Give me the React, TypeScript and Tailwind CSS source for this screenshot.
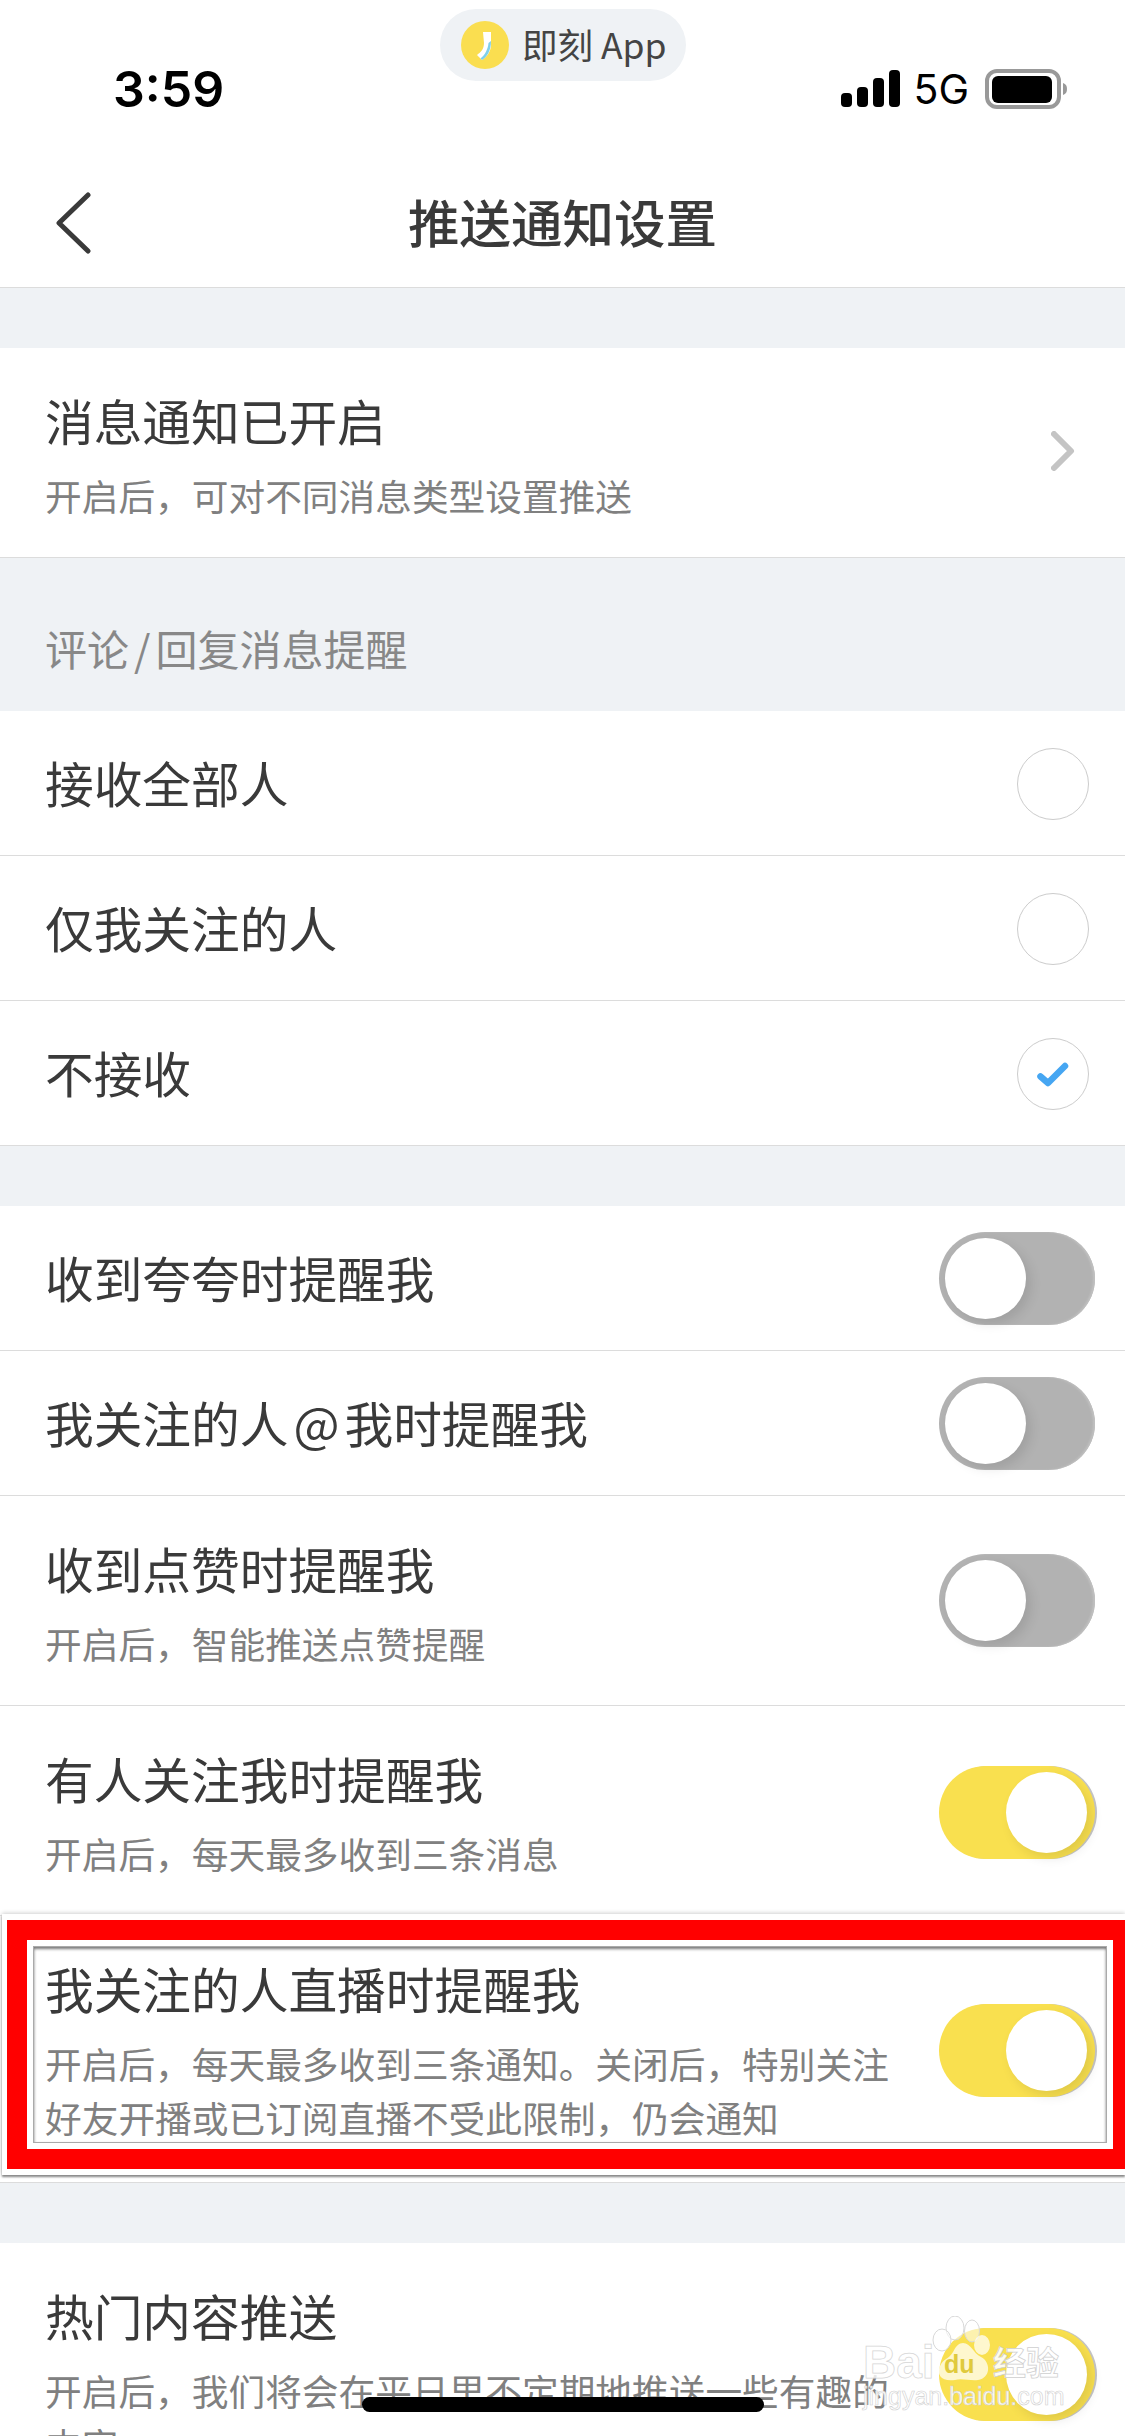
import React from "react";

const CJK = "font-['Noto_Sans_CJK_SC','Noto_Sans',sans-serif]";

function Toggle({ on }: { on: boolean }) {
  return (
    <div
      className={
        on
          ? "flex h-[93px] w-[156px] shrink-0 items-center justify-end rounded-full bg-[#f9e04f] pr-[8px] shadow-[2px_0_0_#c4c4c4]"
          : "flex h-[93px] w-[156px] shrink-0 items-center justify-start rounded-full bg-[#b2b2b2] pl-[6px] shadow-[inset_-2px_0_2px_#c0c0c0]"
      }
    >
      <div className="h-[81px] w-[81px] rounded-full bg-white shadow-[5px_5px_12px_rgba(0,0,0,0.1)]" />
    </div>
  );
}

function Radio({ on }: { on?: boolean }) {
  return (
    <div className="mr-[6px] flex h-[72px] w-[72px] shrink-0 items-center justify-center rounded-full border-[1.5px] border-[#cccccc]">
      {on && (
        <svg width="32" height="26" viewBox="0 0 32 26" fill="none">
          <path d="M3.5 15.5 L11 22 L28 5" stroke="#46a6f2" strokeWidth="6.5" strokeLinecap="round" strokeLinejoin="round" />
        </svg>
      )}
    </div>
  );
}

function Chevron() {
  return (
    <svg className="mr-[20px] mb-[3px] shrink-0" width="24" height="40" viewBox="0 0 24 40" fill="none">
      <path d="M3 3 L20 20 L3 37" stroke="#c4c4c4" strokeWidth="6" strokeLinecap="round" strokeLinejoin="round" />
    </svg>
  );
}

function SimpleRow({ title, control }: { title: React.ReactNode; control: React.ReactNode }) {
  return (
    <div className="flex h-[145px] items-center justify-between border-b border-[#dcdcdc] bg-white pl-[45px] pr-[30px]">
      <div className="pb-[3px] text-[48.7px] leading-[56px] text-[#3a3a3a]">{title}</div>
      <div className="mt-[1px]">{control}</div>
    </div>
  );
}

function SubRow({
  title,
  sub,
  control,
  overlay,
  tall,
}: {
  title: string;
  sub: string;
  control: React.ReactNode;
  overlay?: React.ReactNode;
  tall?: boolean;
}) {
  return (
    <div className="relative flex items-center justify-between border-b border-[#dcdcdc] bg-white pl-[45px] pr-[30px]">
      <div className={tall ? "flex min-w-0 flex-col pb-[38px] pt-[44px]" : "flex min-w-0 flex-col pb-[35px] pt-[44px]"}>
        <div className="text-[48.7px] leading-[56px] text-[#3a3a3a]">{title}</div>
        <div className="mt-[20px] max-w-[860px] text-[36.7px] leading-[54px] text-[#808080]">{sub}</div>
      </div>
      {control}
      {overlay}
    </div>
  );
}

function Annotation() {
  return (
    <div className="pointer-events-none absolute left-[2px] right-0 top-[-2px] h-[261px] border-y-[6px] border-l-[5px] border-white shadow-[0_2px_2px_#888888,0_-1px_4px_#d0d0d0]">
      <div className="h-full border-y-[20px] border-l-[20px] border-r-[12px] border-[#ff0000]">
        <div className="h-full border-[6px] border-white">
          <div className="h-full border border-[#aaaaaa] shadow-[inset_0_2px_3px_#777777]" />
        </div>
      </div>
    </div>
  );
}

function Watermark() {
  return (
    <div className="pointer-events-none absolute left-[863px] top-[47px] h-[125px] w-[205px]">
      <span className="absolute left-0 top-[47px] font-['Liberation_Sans',sans-serif] text-[46px] font-bold leading-[50px] text-white/80 [-webkit-text-stroke:0.75px_#d6d6d6]">
        Bai
      </span>
      <svg className="absolute left-[69px] top-[26px]" width="62" height="70" viewBox="0 0 62 70">
        <ellipse cx="23" cy="12" rx="9" ry="12" fill="#ffffff" fillOpacity="0.55" stroke="#d8d8d8" />
        <ellipse cx="40" cy="15" rx="7.5" ry="11" fill="#ffffff" fillOpacity="0.55" stroke="#d8d8d8" />
        <ellipse cx="10" cy="24" rx="9" ry="11" fill="#ffffff" fillOpacity="0.55" stroke="#d8d8d8" />
        <ellipse cx="50" cy="29" rx="8" ry="10" fill="#ffffff" fillOpacity="0.72" />
        <path d="M31 27 C39 27 41 37 49 41 C59 46 59 62 46 64 C38 65 30 62 23 64 C10 66 4 59 8 50 C11 43 17 43 21 36 C24 30 27 27 31 27 Z" fill="#ffffff" fillOpacity="0.72" />
        <text x="12" y="57" fontFamily="Liberation Sans, sans-serif" fontWeight="700" fontSize="25" fill="#e0ca3c">du</text>
      </svg>
      <span className={`absolute left-[130px] top-[51px] text-[33px] font-bold leading-[40px] text-white/90 [-webkit-text-stroke:0.75px_#cfcfcf] ${CJK}`}>
        经验
      </span>
      <span className="absolute left-0 top-[91px] whitespace-nowrap font-['Liberation_Sans',sans-serif] text-[25px] leading-[30px] text-white/90 [-webkit-text-stroke:0.6px_#d0d0d0]">
        jingyan.baidu.com
      </span>
    </div>
  );
}

export default function App() {
  return (
    <div className={`relative h-[2436px] w-[1125px] overflow-hidden bg-[#eff2f5] ${CJK}`}>
      <header className="flex h-[288px] flex-col border-b border-[#dcdcdc] bg-white">
        <div className="mt-[60px] flex h-[58px] items-center justify-between pl-[113px] pr-[56px]">
          <span className="font-['Inter',sans-serif] text-[50px] font-semibold leading-none text-black">3:59</span>
          <div className="flex items-center">
            <svg width="60" height="40" viewBox="0 0 60 40" fill="#000000">
              <rect x="1" y="24" width="11" height="14" rx="4" />
              <rect x="17" y="18" width="11" height="20" rx="4" />
              <rect x="33" y="9" width="11" height="29" rx="4" />
              <rect x="49" y="1" width="11" height="37" rx="4" />
            </svg>
            <span className="ml-[13px] font-['Inter',sans-serif] text-[41px] font-normal leading-none text-black">5G</span>
            <svg className="ml-[16px]" width="84" height="40" viewBox="0 0 84 40" fill="none">
              <rect x="2" y="2" width="72" height="36" rx="10" stroke="#999999" strokeWidth="4" />
              <rect x="7" y="7" width="60" height="27" rx="6" fill="#000000" />
              <path d="M78 14 C81 15 82 17 82 20 C82 23 81 25 78 26 Z" fill="#999999" />
            </svg>
          </div>
        </div>
        <nav className="mt-[53px] grid h-[100px] grid-cols-[1fr_auto_1fr] items-center">
          <div className="mt-[4px] pl-[55px]">
            <svg width="36" height="62" viewBox="0 0 36 62" fill="none">
              <path d="M33 3 L4 31 L33 59" stroke="#3a3a3a" strokeWidth="5" strokeLinecap="round" strokeLinejoin="round" />
            </svg>
          </div>
          <h1 className="text-[51.5px] font-medium leading-none text-[#3a3a3a]">推送通知设置</h1>
          <div />
        </nav>
      </header>

      <div className="absolute left-[440px] top-[9px] flex h-[72px] w-[246px] items-center gap-[13px] rounded-full bg-[#eff2f5] pl-[21px]">
        <svg width="48" height="48" viewBox="0 0 48 48">
          <circle cx="24" cy="24" r="24" fill="#fade50" />
          <path d="M22 11 L30 11 L30 24 C30 30 26 36 21 39 L16 34 C20 31 23 28 23 22 Z" fill="#ffffff" />
          <path d="M30 20 C30 30 26 36 21 39 L19.5 37.5 C24 34 27 28 27.5 22 Z" fill="#7fd0ea" />
        </svg>
        <span className="mb-[3px] whitespace-nowrap text-[35.5px] leading-none text-[#444444]">即刻 App</span>
      </div>

      <div className="mt-[60px]">
        <SubRow title="消息通知已开启" sub="开启后，可对不同消息类型设置推送" control={<Chevron />} />
      </div>

      <div className="flex h-[153px] items-end pb-[38px] pl-[45px] text-[42px] leading-[50px] text-[#888888]">
        评论<span className="mx-[5px]">/</span>回复消息提醒
      </div>

      <SimpleRow title="接收全部人" control={<Radio />} />
      <SimpleRow title="仅我关注的人" control={<Radio />} />
      <SimpleRow title="不接收" control={<Radio on />} />

      <div className="mt-[60px]">
        <SimpleRow title="收到夸夸时提醒我" control={<Toggle on={false} />} />
        <SimpleRow
          title={
            <>
              我关注的人<span className="mx-[5px]">@</span>我时提醒我
            </>
          }
          control={<Toggle on={false} />}
        />
        <SubRow title="收到点赞时提醒我" sub="开启后，智能推送点赞提醒" control={<Toggle on={false} />} />
        <SubRow
          title="有人关注我时提醒我"
          sub="开启后，每天最多收到三条消息"
          control={
            <div className="mt-[4px]">
              <Toggle on />
            </div>
          }
        />
        <SubRow
          tall
          title="我关注的人直播时提醒我"
          sub="开启后，每天最多收到三条通知。关闭后，特别关注好友开播或已订阅直播不受此限制，仍会通知"
          control={
            <div className="mt-[2px]">
              <Toggle on />
            </div>
          }
          overlay={<Annotation />}
        />
      </div>

      <div className="mt-[60px]">
        <SubRow
          title="热门内容推送"
          sub="开启后，我们将会在平日里不定期地推送一些有趣的内容"
          control={<Toggle on />}
          overlay={<Watermark />}
        />
      </div>

      <div className="absolute left-[362px] top-[2397px] h-[15px] w-[402px] rounded-full bg-black" />
    </div>
  );
}
